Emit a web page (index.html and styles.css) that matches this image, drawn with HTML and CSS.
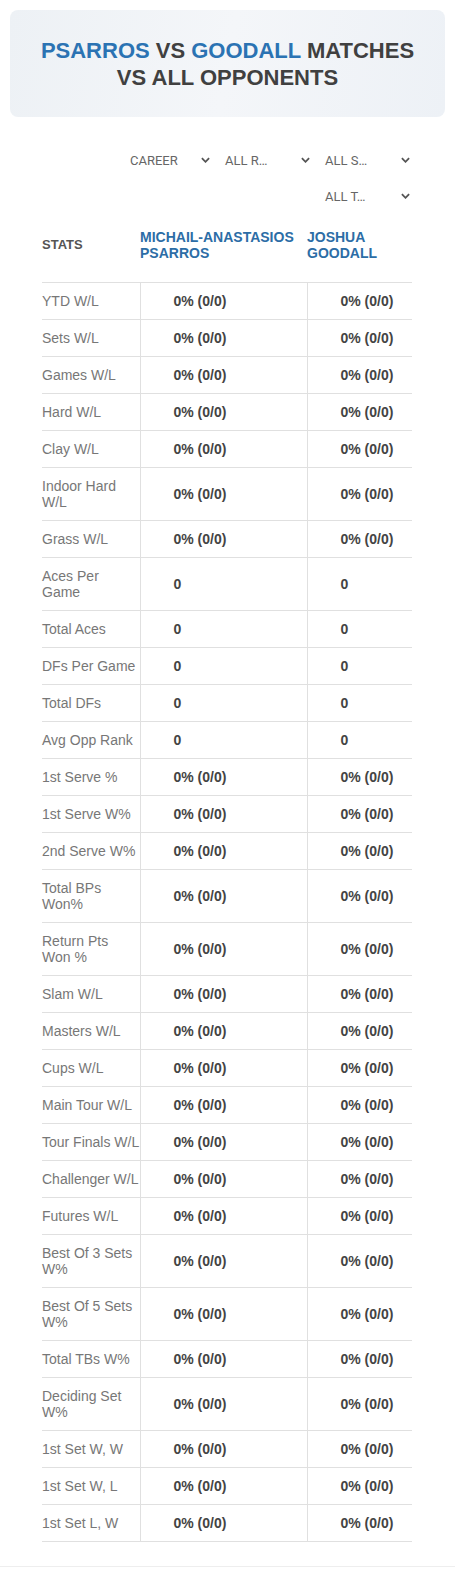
FILE: index.html
```html
<!DOCTYPE html>
<html lang="en">
<head>
    <meta charset="UTF-8">
    <meta name="viewport" content="width=device-width, initial-scale=1.0">
    <title>Psarros vs Goodall</title>
    <link rel="stylesheet" href="styles.css">
</head>
<body>
    <div class="title-card">
        <h1><span class="player">PSARROS</span> VS <span class="player">GOODALL</span> MATCHES VS ALL OPPONENTS</h1>
    </div>

    <div class="panel">
        <div class="filters">
            <div class="filter first"><span>CAREER</span><svg viewBox="0 0 10 6"><path d="M1 1l4 4 4-4" /></svg></div>
            <div class="filter"><span>ALL R…</span><svg viewBox="0 0 10 6"><path d="M1 1l4 4 4-4" /></svg></div>
            <div class="filter"><span>ALL S…</span><svg viewBox="0 0 10 6"><path d="M1 1l4 4 4-4" /></svg></div>
            <div class="filter"><span>ALL T…</span><svg viewBox="0 0 10 6"><path d="M1 1l4 4 4-4" /></svg></div>
        </div>

        <table class="stats">
            <colgroup>
                <col class="col-name">
                <col class="col-p1">
                <col class="col-p2">
            </colgroup>
            <thead>
                <tr>
                    <th class="head-stats">STATS</th>
                    <th class="head-player">MICHAIL-ANASTASIOS PSARROS</th>
                    <th class="head-player">JOSHUA GOODALL</th>
                </tr>
            </thead>
            <tbody>
                <tr><td class="stat-name">YTD W/L</td><td class="stat-val">0% (0/0)</td><td class="stat-val">0% (0/0)</td></tr>
                <tr><td class="stat-name">Sets W/L</td><td class="stat-val">0% (0/0)</td><td class="stat-val">0% (0/0)</td></tr>
                <tr><td class="stat-name">Games W/L</td><td class="stat-val">0% (0/0)</td><td class="stat-val">0% (0/0)</td></tr>
                <tr><td class="stat-name">Hard W/L</td><td class="stat-val">0% (0/0)</td><td class="stat-val">0% (0/0)</td></tr>
                <tr><td class="stat-name">Clay W/L</td><td class="stat-val">0% (0/0)</td><td class="stat-val">0% (0/0)</td></tr>
                <tr><td class="stat-name">Indoor Hard W/L</td><td class="stat-val">0% (0/0)</td><td class="stat-val">0% (0/0)</td></tr>
                <tr><td class="stat-name">Grass W/L</td><td class="stat-val">0% (0/0)</td><td class="stat-val">0% (0/0)</td></tr>
                <tr><td class="stat-name">Aces Per Game</td><td class="stat-val">0</td><td class="stat-val">0</td></tr>
                <tr><td class="stat-name">Total Aces</td><td class="stat-val">0</td><td class="stat-val">0</td></tr>
                <tr><td class="stat-name">DFs Per Game</td><td class="stat-val">0</td><td class="stat-val">0</td></tr>
                <tr><td class="stat-name">Total DFs</td><td class="stat-val">0</td><td class="stat-val">0</td></tr>
                <tr><td class="stat-name">Avg Opp Rank</td><td class="stat-val">0</td><td class="stat-val">0</td></tr>
                <tr><td class="stat-name">1st Serve %</td><td class="stat-val">0% (0/0)</td><td class="stat-val">0% (0/0)</td></tr>
                <tr><td class="stat-name">1st Serve W%</td><td class="stat-val">0% (0/0)</td><td class="stat-val">0% (0/0)</td></tr>
                <tr><td class="stat-name">2nd Serve W%</td><td class="stat-val">0% (0/0)</td><td class="stat-val">0% (0/0)</td></tr>
                <tr><td class="stat-name">Total BPs Won%</td><td class="stat-val">0% (0/0)</td><td class="stat-val">0% (0/0)</td></tr>
                <tr><td class="stat-name">Return Pts Won %</td><td class="stat-val">0% (0/0)</td><td class="stat-val">0% (0/0)</td></tr>
                <tr><td class="stat-name">Slam W/L</td><td class="stat-val">0% (0/0)</td><td class="stat-val">0% (0/0)</td></tr>
                <tr><td class="stat-name">Masters W/L</td><td class="stat-val">0% (0/0)</td><td class="stat-val">0% (0/0)</td></tr>
                <tr><td class="stat-name">Cups W/L</td><td class="stat-val">0% (0/0)</td><td class="stat-val">0% (0/0)</td></tr>
                <tr><td class="stat-name">Main Tour W/L</td><td class="stat-val">0% (0/0)</td><td class="stat-val">0% (0/0)</td></tr>
                <tr><td class="stat-name">Tour Finals W/L</td><td class="stat-val">0% (0/0)</td><td class="stat-val">0% (0/0)</td></tr>
                <tr><td class="stat-name">Challenger W/L</td><td class="stat-val">0% (0/0)</td><td class="stat-val">0% (0/0)</td></tr>
                <tr><td class="stat-name">Futures W/L</td><td class="stat-val">0% (0/0)</td><td class="stat-val">0% (0/0)</td></tr>
                <tr><td class="stat-name">Best Of 3 Sets W%</td><td class="stat-val">0% (0/0)</td><td class="stat-val">0% (0/0)</td></tr>
                <tr><td class="stat-name">Best Of 5 Sets W%</td><td class="stat-val">0% (0/0)</td><td class="stat-val">0% (0/0)</td></tr>
                <tr><td class="stat-name">Total TBs W%</td><td class="stat-val">0% (0/0)</td><td class="stat-val">0% (0/0)</td></tr>
                <tr><td class="stat-name">Deciding Set W%</td><td class="stat-val">0% (0/0)</td><td class="stat-val">0% (0/0)</td></tr>
                <tr><td class="stat-name">1st Set W, W</td><td class="stat-val">0% (0/0)</td><td class="stat-val">0% (0/0)</td></tr>
                <tr><td class="stat-name">1st Set W, L</td><td class="stat-val">0% (0/0)</td><td class="stat-val">0% (0/0)</td></tr>
                <tr><td class="stat-name">1st Set L, W</td><td class="stat-val">0% (0/0)</td><td class="stat-val">0% (0/0)</td></tr>
            </tbody>
        </table>
    </div>

    <div class="footer"></div>
</body>
</html>
```

FILE: styles.css
```css
body {
    margin: 0;
    padding: 10px 0 0;
    font-family: 'Liberation Sans', Arial, sans-serif;
    background: #ffffff;
    color: #444;
}

.title-card {
    margin: 0 10px;
    padding: 27px 22px 26px;
    border-radius: 8px;
    background: linear-gradient(100deg, #edf1f5 0%, #f4f6f9 50%, #edf1f6 100%);
    text-align: center;
}

.title-card h1 {
    margin: 0;
    font-size: 22px;
    line-height: 27px;
    font-weight: bold;
    color: #404040;
}

.title-card .player {
    color: #2b73b3;
}

.panel {
    padding: 27px 43px 0 42px;
}

.filters {
    display: flex;
    flex-wrap: wrap;
    justify-content: flex-end;
    column-gap: 5px;
    row-gap: 4px;
}

.filter {
    width: 95px;
    height: 32px;
    box-sizing: border-box;
    padding: 0 2px 0 8px;
    display: flex;
    align-items: center;
    justify-content: space-between;
    font-family: Roboto, sans-serif;
    font-size: 13px;
    color: #666;
}

.filter.first {
    padding-left: 13px;
}

.filter svg {
    width: 9px;
    height: 6px;
    fill: none;
    stroke: #555;
    stroke-width: 2;
}

.stats {
    width: 370px;
    border-collapse: collapse;
    table-layout: fixed;
}

.col-name {
    width: 98px;
}

.col-p1 {
    width: 167px;
}

.col-p2 {
    width: 105px;
}

.stats th {
    text-align: left;
    vertical-align: middle;
    padding: 17px 0 21px;
    line-height: 16px;
    border-bottom: 1px solid #e0e0e0;
    font-weight: bold;
}

.head-stats {
    font-size: 13px;
    color: #555;
}

.head-player {
    font-size: 14px;
    color: #2c6da6;
}

.stats td {
    padding: 10px 0;
    line-height: 16px;
    font-size: 14px;
    vertical-align: middle;
    border-bottom: 1px solid #e0e0e0;
}

.stat-name {
    color: #777;
}

.stat-val {
    padding-left: 33px !important;
    border-left: 1px solid #e0e0e0;
    font-weight: bold;
    color: #444;
}

.footer {
    margin-top: 24px;
    height: 10px;
    border-top: 1px solid #eeeeee;
}
```
